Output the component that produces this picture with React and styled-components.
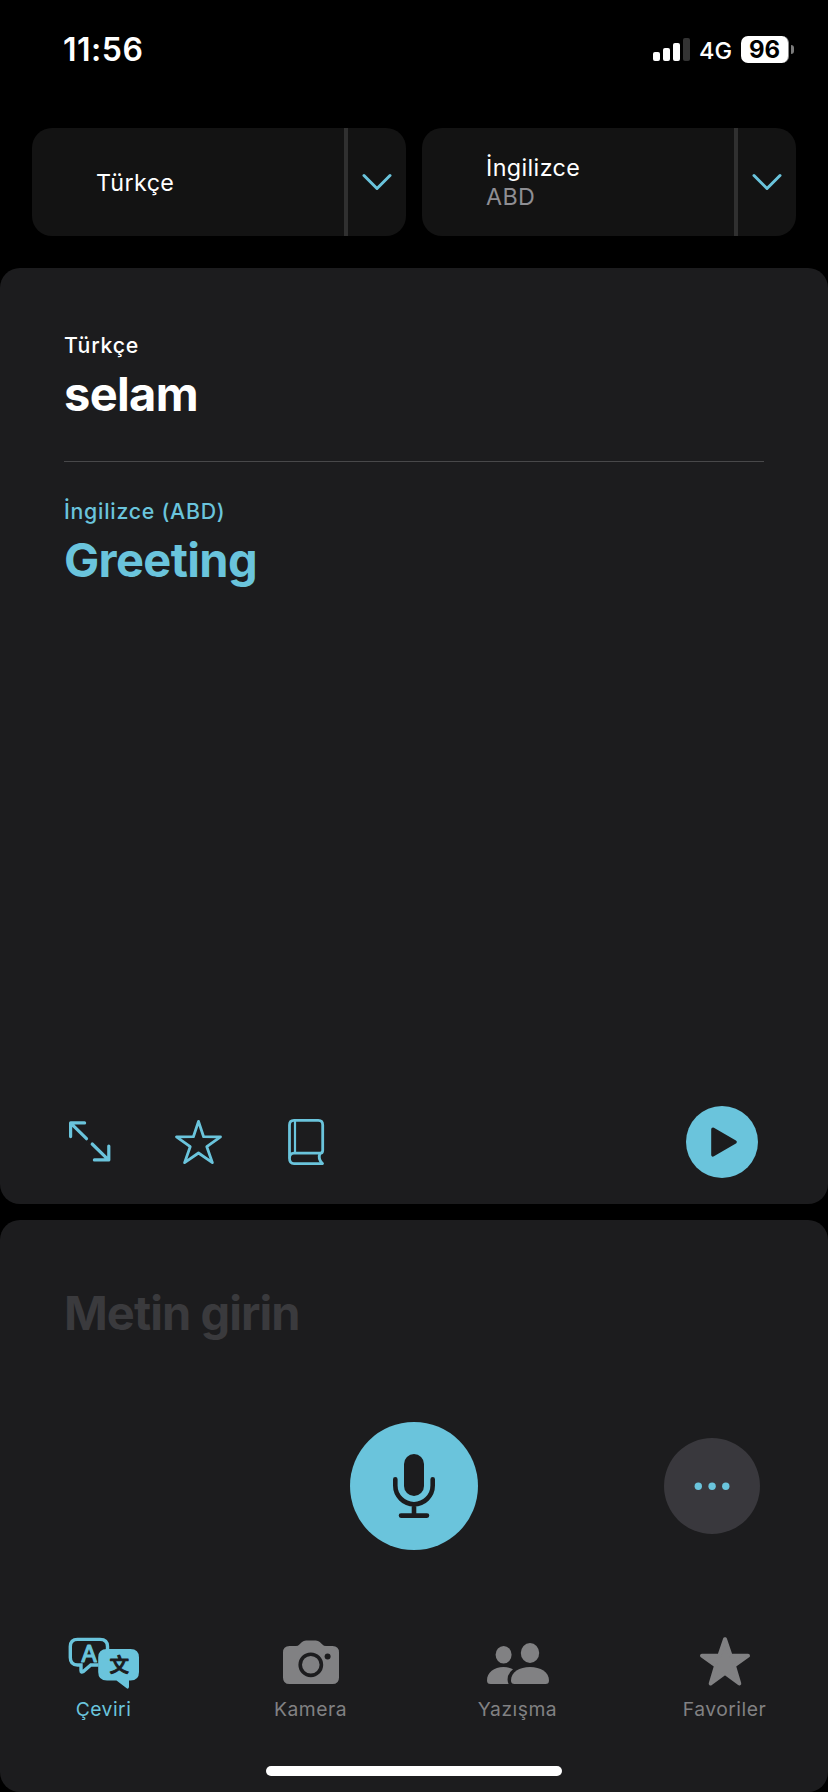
import React from 'react';
import styled, { createGlobalStyle } from 'styled-components';

const ACCENT = '#6ac4dc';
const CARD = '#1c1c1e';
const MUTED = '#818183';

const GlobalStyle = createGlobalStyle`
  * {
    box-sizing: border-box;
  }

  body {
    margin: 0;
    background: #000;
    color: #fff;
    font-family: Inter, 'Liberation Sans', sans-serif;
  }

  button {
    padding: 0;
    border: 0;
    background: none;
    color: inherit;
    font: inherit;
  }

  svg {
    display: block;
    flex-shrink: 0;
  }
`;

const Screen = styled.div`
  display: flex;
  flex-direction: column;
  width: 828px;
  height: 1792px;
  overflow: hidden;
`;

const StatusBar = styled.header`
  display: flex;
  align-items: center;
  justify-content: space-between;
  height: 99px;
  padding: 0 34px 0 63px;
`;

const Time = styled.span`
  font-size: 32px;
  font-weight: 600;
  line-height: 40px;
  letter-spacing: 0.5px;
`;

const StatusIcons = styled.div`
  display: flex;
  align-items: center;
`;

const Network = styled.span`
  width: 32px;
  margin: 2px 10px 0 9px;
  font-size: 23.5px;
  font-weight: 500;
  line-height: 28px;
  white-space: nowrap;
`;

const Battery = styled.div`
  display: flex;
  align-items: center;
  justify-content: center;
  width: 48px;
  height: 27px;
  border-radius: 7px;
  border-right: 1px solid #8a8a8a;
  background: #fff;
  color: #000;
  font-size: 24px;
  font-weight: 700;
  line-height: 27px;
`;

const BatteryTip = styled.div`
  width: 3px;
  height: 9px;
  margin-left: 2px;
  border-radius: 0 3px 3px 0;
  background: #7b7b7b;
`;

const LanguageRow = styled.div`
  display: grid;
  grid-template-columns: 1fr 1fr;
  gap: 16px;
  height: 108px;
  margin: 29px 32px 32px;
`;

const LanguagePicker = styled.div`
  display: flex;
  border-radius: 20px;
  background: #131313;
  overflow: hidden;
`;

const LanguageName = styled.button`
  display: flex;
  flex: 1;
  flex-direction: column;
  justify-content: center;
  padding-left: 64px;
  text-align: left;
  font-size: 23.3px;
  line-height: 29px;
  letter-spacing: 0.4px;
`;

const Region = styled.span`
  color: #8e8e93;
`;

const LanguageToggle = styled.button`
  display: flex;
  align-items: center;
  justify-content: center;
  width: 62px;
  border-left: 4px solid #303030;
`;

const ResultCard = styled.main`
  display: flex;
  flex-direction: column;
  height: 936px;
  padding: 63px 64px 0;
  border-radius: 20px;
  background: ${CARD};
`;

const Phrase = styled.section`
  color: ${(p) => (p.$accent ? ACCENT : '#fff')};
`;

const PhraseLanguage = styled.div`
  margin-bottom: 6px;
  font-size: 21.3px;
  font-weight: 500;
  line-height: 28px;
  letter-spacing: 0.75px;
`;

const PhraseText = styled.div`
  font-size: 47px;
  font-weight: 700;
  line-height: 58px;
  letter-spacing: -0.65px;
`;

const Divider = styled.hr`
  width: 100%;
  height: 1px;
  margin: 38px 0 35px;
  border: 0;
  background: #48484a;
`;

const Actions = styled.div`
  display: flex;
  align-items: center;
  height: 72px;
  margin: auto 6px 26px 4px;
`;

const ActionButton = styled.button`
  display: flex;
  justify-content: center;
  width: 44px;
  margin-right: 64px;
`;

const PlayButton = styled.button`
  display: flex;
  align-items: center;
  justify-content: center;
  width: 72px;
  height: 72px;
  margin-left: auto;
  border-radius: 50%;
  background: ${ACCENT};
`;

const InputCard = styled.section`
  display: flex;
  flex-direction: column;
  height: 572px;
  margin-top: 16px;
  padding-top: 64px;
  border-radius: 20px;
  background: ${CARD};
`;

const Placeholder = styled(PhraseText)`
  padding: 0 64px;
  color: #3a3a3d;
  letter-spacing: -0.95px;
`;

const InputControls = styled.div`
  display: grid;
  grid-template-columns: 1fr 128px 1fr;
  align-items: center;
  margin-top: 80px;
  padding: 0 68px;
`;

const RoundButton = styled.button`
  display: flex;
  grid-column: ${(p) => p.$column};
  align-items: center;
  justify-content: center;
  justify-self: end;
  width: ${(p) => p.$size}px;
  height: ${(p) => p.$size}px;
  border-radius: 50%;
  background: ${(p) => p.$fill};
`;

const TabBar = styled.nav`
  display: grid;
  grid-template-columns: repeat(4, 1fr);
  margin-top: 84px;
`;

const Tab = styled.button`
  display: flex;
  flex-direction: column;
  align-items: center;
  color: ${(p) => (p.$active ? ACCENT : MUTED)};
`;

const TabLabel = styled.span`
  margin-top: 7px;
  font-size: 19.3px;
  line-height: 24px;
  letter-spacing: 0.5px;
`;

const HomeIndicator = styled.div`
  width: 296px;
  height: 10px;
  margin: auto auto 16px;
  border-radius: 5px;
  background: #fff;
`;

const SignalIcon = () => (
  <svg width="37" height="23" viewBox="0 0 37 23" fill="#fff">
    <rect x="0" y="14" width="7" height="9" rx="2" />
    <rect x="10" y="10" width="7" height="13" rx="2" />
    <rect x="20" y="5" width="7" height="18" rx="2" />
    <rect x="30" y="0" width="7" height="23" rx="2" fill="#333" />
  </svg>
);

const ChevronIcon = () => (
  <svg width="30" height="18" viewBox="0 0 30 18" fill="none">
    <path d="M2 2.500 15 15.500 28 2.500" stroke={ACCENT} strokeWidth="3" strokeLinecap="round" strokeLinejoin="round" />
  </svg>
);

const ExpandIcon = () => (
  <svg width="44" height="46" viewBox="0 0 44 46" fill="none" stroke={ACCENT} strokeWidth="3.2" strokeLinecap="round" strokeLinejoin="round">
    <path d="M2.600 17.600V3.900h14M3.200 4.600l15.300 15.100" />
    <path d="M24.200 25 40.200 40.600M40.800 27v13.900H26.400" />
  </svg>
);

const StarOutlineIcon = () => (
  <svg width="48" height="46" viewBox="-0.500 0 48 46" fill="none">
    <path
      d="M24 2.4 29.1 17.7 46 17.8 32.3 27.7 37.9 43.6 24 34 10.1 43.6 15.7 27.7 2 17.8 18.9 17.7Z"
      stroke={ACCENT}
      strokeWidth="2.8"
      strokeLinejoin="round"
    />
  </svg>
);

const BookIcon = () => (
  <svg width="38" height="48" viewBox="-1 -1 38 48" fill="none" stroke={ACCENT} strokeWidth="2.8" strokeLinecap="round">
    <path d="M1.5 39.5V6Q1.5 1.4 6 1.4H30.4Q34.7 1.4 34.7 6V31.4Q34.7 34.2 31.8 34.2H6Q1.5 34.2 1.5 39.3 1.5 44.6 6 44.6H34.3" />
    <path d="M7 1.4V34.2" strokeWidth="2.2" strokeLinecap="butt" />
    <path d="M32 34.4Q29.6 39.8 34.3 44.4" />
  </svg>
);

const PlayIcon = () => (
  <svg width="72" height="72" viewBox="0 0 72 72">
    <path d="M27 23.2 49 36 27 48.8Z" fill={CARD} stroke={CARD} strokeWidth="3.6" strokeLinejoin="round" />
  </svg>
);

const MicIcon = () => (
  <svg width="128" height="128" viewBox="0 0 128 128" fill="none" stroke={CARD} strokeWidth="4.6" strokeLinecap="round">
    <rect x="54" y="32" width="20" height="42" rx="10" fill={CARD} stroke="none" />
    <path d="M45.3 57.2V63.600a18.7 18.600 0 0 0 37.4 0V57.2M64 83v10M51 93.6H77" />
  </svg>
);

const DotsIcon = () => (
  <svg width="36" height="8" viewBox="0 0 36 8" fill={ACCENT}>
    <circle cx="4.3" cy="4.2" r="3.7" />
    <circle cx="18.1" cy="4.2" r="3.7" />
    <circle cx="31.8" cy="4.2" r="3.7" />
  </svg>
);

const TranslateIcon = () => (
  <svg width="72" height="56" viewBox="0 0 72 56">
    <path
      d="M30.500 31H22.800L15.200 37.600Q13 39 13 36.500V31H9.500Q2.300 30.800 2.300 23.500V12.600Q2.300 5.400 9.500 5.400H32Q39.500 5.400 39.500 12.600V17"
      fill="none"
      stroke={ACCENT}
      strokeWidth="3.4"
    />
    <text x="21" y="28" fill={ACCENT} stroke={ACCENT} strokeWidth="1.2" strokeLinejoin="round" textAnchor="middle" fontFamily="Inter, sans-serif" fontSize="23.500" fontWeight="400">
      A
    </text>
    <path
      d="M39 15H62.5Q71 15 71 23.5V38Q71 46.500 62.500 46.500H61V52.500Q61 56 58 53.800L48.500 46.500H39Q30.200 46.500 30.200 38V23.500Q30.200 15 39 15Z"
      fill={ACCENT}
    />
    <text x="51.200" y="37.800" fill={CARD} stroke={CARD} strokeWidth="1" strokeLinejoin="round" textAnchor="middle" fontFamily="'Noto Sans CJK SC', sans-serif" fontSize="19.500" fontWeight="500">
      文
    </text>
  </svg>
);

const CameraIcon = () => (
  <svg width="56" height="56" viewBox="0 0 56 56" fill={MUTED}>
    <path d="M6.5 12H13Q15 12 16.4 10.5L19 8Q20.6 6.4 23 6.4H32.8Q35.2 6.4 36.8 8L39.4 10.5Q40.8 12 43 12H49.5Q56 12 56 18.5V43.4Q56 50 49.5 50H6.5Q0 50 0 43.4V18.5Q0 12 6.5 12Z" />
    <circle cx="27.8" cy="30.8" r="10.6" stroke={CARD} strokeWidth="3.6" />
    <circle cx="44.6" cy="22.5" r="3" fill={CARD} />
  </svg>
);

const PeopleIcon = () => (
  <svg width="62" height="56" viewBox="0 0 62 56" fill={MUTED}>
    <ellipse cx="16.6" cy="20.7" rx="8" ry="8.8" />
    <path d="M0 46.5C0 38.5 7 33 16.5 33Q21.5 33 26 35.3Q20.3 39.5 20.6 46Q20.7 48.5 21.6 50H3.5Q0 50 0 46.5Z" />
    <ellipse cx="43" cy="19" rx="9.2" ry="10" />
    <path d="M24 46.5C24 38 32.5 33 43 33S62 38 62 46.5Q62 50 58.5 50H27.5Q24 50 24 46.5Z" />
  </svg>
);

const StarIcon = () => (
  <svg width="52" height="56" viewBox="0 0 52 56">
    <path
      d="M26 5.2 31.6 21.6 49 21.7 35 31.700 40.3 49.5 26 39 11.7 49.5 17 31.700 3 21.700 20.4 21.6Z"
      fill={MUTED}
      stroke={MUTED}
      strokeWidth="4"
      strokeLinejoin="round"
    />
  </svg>
);

const tabs = [
  { label: 'Çeviri', Icon: TranslateIcon, active: true },
  { label: 'Kamera', Icon: CameraIcon },
  { label: 'Yazışma', Icon: PeopleIcon },
  { label: 'Favoriler', Icon: StarIcon },
];

const Language = ({ name, region }) => (
  <LanguagePicker>
    <LanguageName>
      <span>{name}</span>
      {region && <Region>{region}</Region>}
    </LanguageName>
    <LanguageToggle aria-label={name}>
      <ChevronIcon />
    </LanguageToggle>
  </LanguagePicker>
);

const App = () => (
  <>
    <GlobalStyle />
    <Screen lang="tr">
      <StatusBar>
        <Time>11:56</Time>
        <StatusIcons>
          <SignalIcon />
          <Network>4G</Network>
          <Battery>96</Battery>
          <BatteryTip />
        </StatusIcons>
      </StatusBar>

      <LanguageRow>
        <Language name="Türkçe" />
        <Language name="İngilizce" region="ABD" />
      </LanguageRow>

      <ResultCard>
        <Phrase>
          <PhraseLanguage>Türkçe</PhraseLanguage>
          <PhraseText>selam</PhraseText>
        </Phrase>
        <Divider />
        <Phrase $accent>
          <PhraseLanguage>İngilizce (ABD)</PhraseLanguage>
          <PhraseText>Greeting</PhraseText>
        </Phrase>
        <Actions>
          <ActionButton>
            <ExpandIcon />
          </ActionButton>
          <ActionButton>
            <StarOutlineIcon />
          </ActionButton>
          <ActionButton>
            <BookIcon />
          </ActionButton>
          <PlayButton>
            <PlayIcon />
          </PlayButton>
        </Actions>
      </ResultCard>

      <InputCard>
        <Placeholder>Metin girin</Placeholder>
        <InputControls>
          <RoundButton $column={2} $size={128} $fill={ACCENT}>
            <MicIcon />
          </RoundButton>
          <RoundButton $column={3} $size={96} $fill="#39383d">
            <DotsIcon />
          </RoundButton>
        </InputControls>
        <TabBar>
          {tabs.map(({ label, Icon, active }) => (
            <Tab key={label} $active={active}>
              <Icon />
              <TabLabel>{label}</TabLabel>
            </Tab>
          ))}
        </TabBar>
        <HomeIndicator />
      </InputCard>
    </Screen>
  </>
);

export default App;
